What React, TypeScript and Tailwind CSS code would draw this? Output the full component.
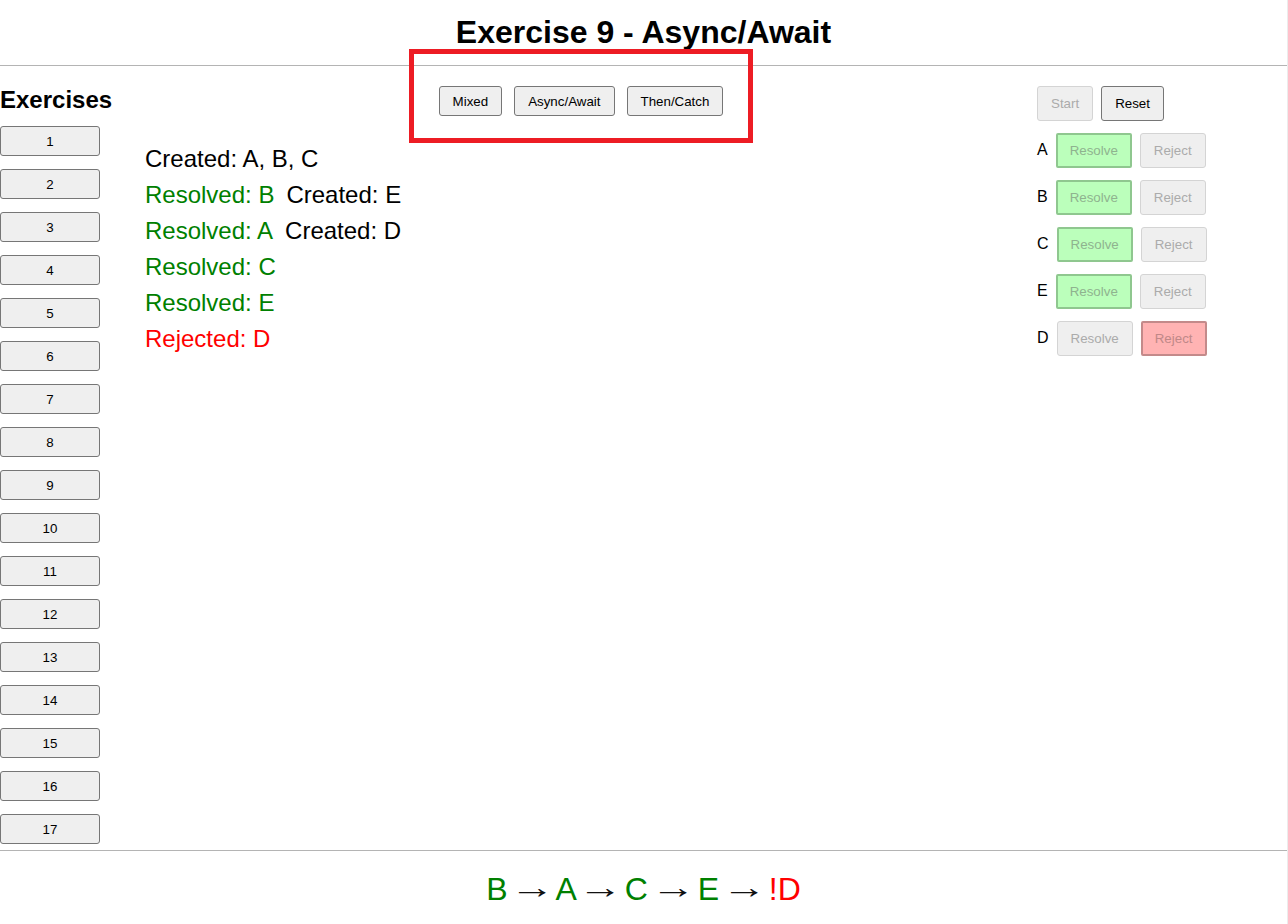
const exercises = Array.from({ length: 17 }, (_, i) => i + 1);

const rows: { id: string; resolved: boolean }[] = [
  { id: 'A', resolved: true },
  { id: 'B', resolved: true },
  { id: 'C', resolved: true },
  { id: 'E', resolved: true },
  { id: 'D', resolved: false },
];

const btn =
  'rounded-[3px] border border-[#767676] bg-[#efefef] text-[13.33px] text-black leading-none';

function Arrow() {
  return <span className="inline-block -translate-y-[2px] scale-x-[1.4] text-[#111]">→</span>;
}

export default function App() {
  return (
    <div className="relative min-h-[924px] w-full border-r border-[#ececec] bg-white font-['Liberation_Sans',Arial,sans-serif] text-black">
      <header className="flex justify-center pt-[14px] pb-[14px]">
        <h1 className="text-[32px] font-bold leading-[37px]">Exercise 9 - Async/Await</h1>
      </header>
      <div className="h-px bg-[#b4b4b4]" />

      <div className="flex">
        <aside className="w-[125px] shrink-0 pb-[6px]">
          <h2 className="mt-[20px] text-[24px] font-bold leading-[27.6px]">Exercises</h2>
          <div className="mt-[12.4px] flex flex-col gap-[13px]">
            {exercises.map(n => (
              <button key={n} className={`${btn} h-[30px] w-[100px] pt-px`}>
                {n}
              </button>
            ))}
          </div>
        </aside>

        <main className="w-[912px] shrink-0 pt-[20px]">
          <div className="flex justify-center gap-[12px]">
            <button className={`${btn} h-[30px] px-[13px] pt-px`}>Mixed</button>
            <button className={`${btn} h-[30px] px-[13px] pt-px`}>Async/Await</button>
            <button className={`${btn} h-[30px] px-[13px] pt-px`}>Then/Catch</button>
          </div>
          <div className="mt-[25px] pl-[20px] text-[24px] leading-[36px]">
            <div>Created: A, B, C</div>
            <div className="flex gap-[12px]">
              <span className="text-[#008000]">Resolved: B</span>
              <span>Created: E</span>
            </div>
            <div className="flex gap-[12px]">
              <span className="text-[#008000]">Resolved: A</span>
              <span>Created: D</span>
            </div>
            <div className="text-[#008000]">Resolved: C</div>
            <div className="text-[#008000]">Resolved: E</div>
            <div className="text-[#ff0000]">Rejected: D</div>
          </div>
        </main>

        <section className="flex flex-1 flex-col gap-3 pt-[20px]">
          <div className="flex gap-2">
            <button className="h-[35px] rounded-[3px] border border-[#d4d4d4] bg-[#efefef] px-[13px] text-[13.33px] text-[#ababab]">
              Start
            </button>
            <button className={`${btn} h-[35px] px-[13px]`}>Reset</button>
          </div>
          {rows.map(r => (
            <div key={r.id} className="flex items-center gap-2">
              <span className="-mt-[2px] text-[16px] leading-[18px]">{r.id}</span>
              <button
                className={
                  r.resolved
                    ? 'h-[35px] rounded-[2px] border-2 border-[#8fc78f] bg-[#bbffbb] px-[12px] text-[13.33px] text-[#8fb38f]'
                    : 'h-[35px] rounded-[3px] border border-[#d4d4d4] bg-[#efefef] px-[13px] text-[13.33px] text-[#ababab]'
                }
              >
                Resolve
              </button>
              <button
                className={
                  r.resolved
                    ? 'h-[35px] rounded-[3px] border border-[#d4d4d4] bg-[#efefef] px-[13px] text-[13.33px] text-[#ababab]'
                    : 'h-[35px] rounded-[2px] border-2 border-[#c38a8a] bg-[#ffb3b3] px-[12px] text-[13.33px] text-[#c08888]'
                }
              >
                Reject
              </button>
            </div>
          ))}
        </section>
      </div>

      <div className="h-px bg-[#b4b4b4]" />
      <footer className="flex justify-center pt-[20px] pb-[15px] text-[32px] leading-[37px]">
        <span>
          <span className="text-[#008000]">B</span> <Arrow /> <span className="text-[#008000]">A</span> <Arrow />{' '}
          <span className="text-[#008000]">C</span> <Arrow /> <span className="text-[#008000]">E</span> <Arrow />{' '}
          <span className="text-[#ff0000]">!D</span>
        </span>
      </footer>

      <div className="pointer-events-none absolute left-[409px] top-[49px] h-[94px] w-[344px] border-[5px] border-[#ed1c24]" />
    </div>
  );
}
